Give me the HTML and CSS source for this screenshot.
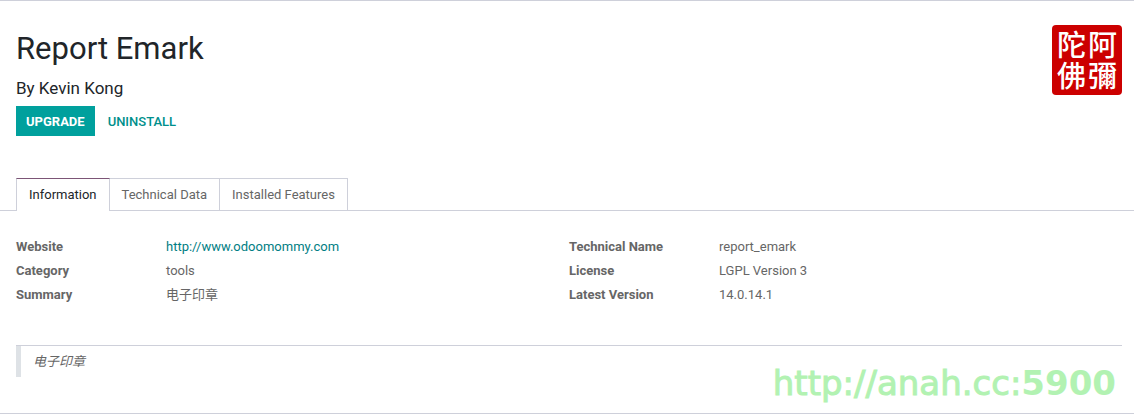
FILE: index.html
```html
<!DOCTYPE html>
<html lang="en">
<head>
  <meta charset="utf-8">
  <title>Report Emark</title>
  <link rel="stylesheet" href="styles.css">
</head>
<body>
  <main class="sheet">
    <header class="app-header">
      <div class="app-title">
        <h1>Report Emark</h1>
        <h2>By Kevin Kong</h2>
        <div class="actions">
          <button class="btn btn-primary" type="button">UPGRADE</button>
          <button class="btn btn-link" type="button">UNINSTALL</button>
        </div>
      </div>
      <svg class="app-icon" viewBox="0 0 70 70">
        <rect width="70" height="70" rx="4" fill="#cc0000"/>
        <g fill="#fff" lang="zh-Hant">
          <text x="5" y="31">陀</text>
          <text x="36" y="31">阿</text>
          <text x="5" y="62">佛</text>
          <text x="36" y="62">彌</text>
        </g>
      </svg>
    </header>

    <nav class="tabs">
      <a class="tab active" href="#information">Information</a>
      <a class="tab" href="#technical">Technical Data</a>
      <a class="tab" href="#features">Installed Features</a>
    </nav>

    <section class="info" id="information">
      <table class="group">
        <tr><th scope="row">Website</th><td><a href="http://www.odoomommy.com">http://www.odoomommy.com</a></td></tr>
        <tr><th scope="row">Category</th><td>tools</td></tr>
        <tr><th scope="row">Summary</th><td lang="zh">电子印章</td></tr>
      </table>
      <table class="group">
        <tr><th scope="row">Technical Name</th><td>report_emark</td></tr>
        <tr><th scope="row">License</th><td>LGPL Version 3</td></tr>
        <tr><th scope="row">Latest Version</th><td>14.0.14.1</td></tr>
      </table>
    </section>

    <div class="description">
      <blockquote lang="zh">电子印章</blockquote>
    </div>
    <div class="watermark"><span>http://anah.cc:</span><b>5900</b></div>
  </main>
</body>
</html>
```
FILE: styles.css
```css
* {
  box-sizing: border-box;
}
body {
  margin: 0;
  background-color: #fff;
  color: #666;
  font-family: Roboto, "Noto Sans CJK SC", sans-serif;
  font-size: 13px;
  line-height: 20px;
}
a {
  color: #017e84;
  text-decoration: none;
}
.sheet {
  position: relative;
  border-top: 1px solid #ced0da;
  border-bottom: 1px solid #ced0da;
  padding-bottom: 36px;
}
.app-header {
  display: flex;
  justify-content: space-between;
  align-items: flex-start;
  padding: 24px 12px 42px 16px;
}
h1,
h2 {
  margin: 0;
  color: #212529;
  font-weight: 400;
}
h1 {
  font-size: 31px;
  line-height: 48px;
}
h2 {
  margin-top: 4px;
  font-size: 17px;
  line-height: 22px;
}
.actions {
  display: flex;
  gap: 3px;
  margin-top: 7px;
}
.btn {
  height: 30px;
  padding: 0 10px;
  border: 0;
  background-color: transparent;
  font-family: inherit;
  font-size: 13px;
  font-weight: 500;
  cursor: pointer;
}
.btn-primary {
  background-color: #00a09d;
  color: #fff;
  font-weight: 700;
}
.btn-link {
  color: #008f8c;
}
.app-icon {
  width: 70px;
  height: 70px;
  overflow: visible;
  font-family: "Noto Sans CJK TC", sans-serif;
  font-size: 29px;
  font-weight: 500;
}
.tabs {
  display: flex;
  padding-left: 16px;
  border-bottom: 1px solid #ced0da;
}
.tab {
  padding: 6px 12px 5px;
  border: 1px solid #ced0da;
  border-left: 0;
  border-bottom: 0;
  color: #666;
}
.tab.active {
  margin-bottom: -1px;
  border-left: 1px solid #ced0da;
  border-top-color: #7c5576;
  background-color: #fff;
  color: #212529;
}
.info {
  display: grid;
  grid-template-columns: 1fr 1fr;
  padding: 24px 12px 38px 16px;
}
.group {
  width: 100%;
  border-collapse: collapse;
  table-layout: fixed;
}
.group th,
.group td {
  height: 24px;
  padding: 0;
  text-align: left;
}
.group th {
  width: 150px;
  font-weight: 700;
}
.description {
  margin: 0 12px 0 16px;
  border-top: 1px solid #ced0da;
}
blockquote {
  margin: 0;
  padding: 6px 12px 5px;
  border-left: 5px solid #dee2e6;
  font-style: italic;
}
/* server address stamped over the bottom corner */
.watermark {
  position: absolute;
  right: 18px;
  bottom: 10px;
  color: #b2f2b2;
  font-family: "DejaVu Sans", sans-serif;
  font-size: 34px;
  line-height: 40px;
}
.watermark span {
  -webkit-text-stroke: 1px #b2f2b2;
}
```
